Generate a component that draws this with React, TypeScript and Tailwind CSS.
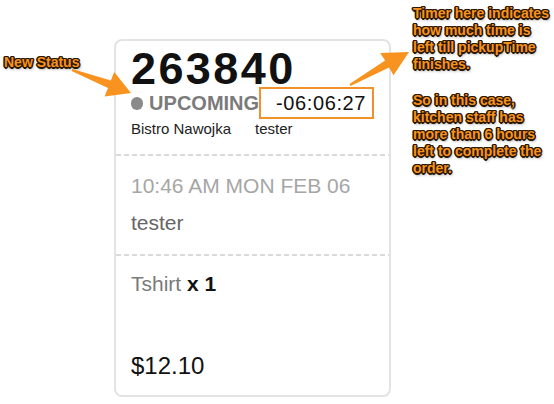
import React from 'react';

const outline =
  '[text-shadow:-1px_-1px_0_#2a1600,1px_-1px_0_#2a1600,-1px_1px_0_#2a1600,1px_1px_0_#2a1600,0_1.5px_0_#2a1600,0_-1.5px_0_#2a1600,1.5px_0_0_#2a1600,-1.5px_0_0_#2a1600,1px_2px_3px_rgba(0,0,0,0.6)]';

const Dashed: React.FC = () => (
  <div className="h-[2px] w-full bg-[repeating-linear-gradient(90deg,#dadada_0_5px,transparent_5px_8px)]" />
);

const OrderCard: React.FC = () => (
  <div className="flex h-[358px] w-[277px] flex-col rounded-[8px] border-2 border-[#e3e3e3] bg-white">
    {/* Header */}
    <div className="px-[15px] pt-[8px] pb-[16px]">
      <div className="text-[45px] leading-[40px] font-bold tracking-[2.4px] text-[#111]">263840</div>
      <div className="-mt-[2px] flex items-center">
        <span className="h-[13px] w-[13px] rounded-full bg-[#8a8a8a]" />
        <span className="ml-[6px] text-[20px] leading-[24px] font-bold text-[#7b7b7b]">UPCOMING</span>
        <div className="flex h-[32px] w-[122px] items-center border-2 border-[#f0912c] pl-[15px] text-[20px] tracking-[0.6px] text-[#111]">
          -06:06:27
        </div>
      </div>
      <div className="mt-[1px] flex gap-[24px] text-[15px] leading-[18px] text-[#222]">
        <span>Bistro Nawojka</span>
        <span>tester</span>
      </div>
    </div>
    <Dashed />

    {/* Pickup */}
    <div className="px-[15px] pt-[18px] pb-[19px]">
      <div className="text-[21px] leading-[24px] text-[#a6a6a6]">10:46 AM MON FEB 06</div>
      <div className="mt-[13px] text-[21px] leading-[24px] text-[#666]">tester</div>
    </div>
    <Dashed />

    {/* Items */}
    <div className="flex flex-1 flex-col justify-between px-[15px] pt-[16px] pb-[15px]">
      <div className="text-[21px] leading-[24px] text-[#7a7a7a]">
        Tshirt <span className="font-bold text-[#111]">x 1</span>
      </div>
      <div className="text-[24px] leading-[28px] text-[#111]">$12.10</div>
    </div>
  </div>
);

const App: React.FC = () => {
  return (
    <div className="relative h-[404px] w-[554px] overflow-hidden bg-white font-['Liberation_Sans',Arial,sans-serif]">
      <div className="pt-[39px] pl-[114px]">
        <OrderCard />
      </div>

      {/* Annotations */}
      <div className={`absolute top-[54px] left-[4px] text-[14px] leading-[16px] font-bold whitespace-nowrap text-[#f7941d] ${outline}`}>
        New Status
      </div>

      <div className={`absolute top-[5px] left-[413px] text-[14px] leading-[17px] font-bold whitespace-nowrap text-[#f7941d] ${outline}`}>
        <p>
          Timer here indicates<br />
          how much time is<br />
          left till pickupTime<br />
          finishes.
        </p>
        <p className="mt-[19px]">
          So in this case,<br />
          kitchen staff has<br />
          more than 6 hours<br />
          left to complete the<br />
          order.
        </p>
      </div>

      <svg className="pointer-events-none absolute top-0 left-0" width="554" height="404">
        <polygon
          points="72.4,69.1 110.8,80.5 114.2,72 131,93 104.6,96.4 108,88 71.6,70.9"
          fill="#f7931e"
        />
        <polygon
          points="350.5,85.9 389.1,67.4 393.5,75.3 409,52 380.2,53 385.1,60.4 349.5,84.1"
          fill="#f7931e"
        />
      </svg>
    </div>
  );
};

export default App;
